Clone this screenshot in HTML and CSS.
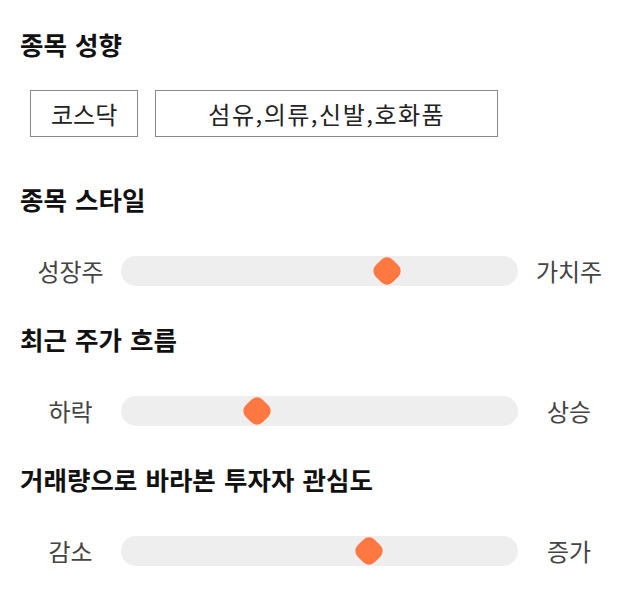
FILE: index.html
```html
<!DOCTYPE html>
<html lang="ko">
<head>
<meta charset="utf-8">
<link rel="stylesheet" href="styles.css">
</head>
<body>
<main class="page">
  <h2 class="title first">종목 성향</h2>
  <div class="tags">
    <span class="tag">코스닥</span>
    <span class="tag wide">섬유,의류,신발,호화품</span>
  </div>

  <h2 class="title">종목 스타일</h2>
  <div class="slider">
    <span class="label">성장주</span>
    <div class="track"><span class="thumb" style="left: 67%"></span></div>
    <span class="label">가치주</span>
  </div>

  <h2 class="title">최근 주가 흐름</h2>
  <div class="slider">
    <span class="label">하락</span>
    <div class="track"><span class="thumb" style="left: 34.2%"></span></div>
    <span class="label">상승</span>
  </div>

  <h2 class="title">거래량으로 바라본 투자자 관심도</h2>
  <div class="slider">
    <span class="label">감소</span>
    <div class="track"><span class="thumb" style="left: 62.5%"></span></div>
    <span class="label">증가</span>
  </div>
</main>
</body>
</html>
```
FILE: styles.css
```css
html, body {
  margin: 0;
  padding: 0;
  background: #ffffff;
}

.page {
  padding: 0 20px;
  font-family: "Noto Sans CJK KR", "Noto Sans", sans-serif;
  color: #111;
}

.title {
  margin: 0 0 41px;
  font-size: 25.5px;
  font-weight: 700;
  line-height: 32px;
  height: 32px;
  word-spacing: 1px;
  color: #111;
}

.title.first {
  padding-top: 28px;
  margin-bottom: 30px;
}

.tags {
  display: flex;
  gap: 17px;
  padding-left: 10px;
  margin-bottom: 46px;
}

.tag {
  display: flex;
  align-items: center;
  justify-content: center;
  height: 47px;
  box-sizing: border-box;
  border: 1px solid #8a8a8a;
  font-size: 24px;
  color: #222;
  padding: 0 20px;
}

.tag.wide {
  width: 343px;
  letter-spacing: 1.5px;
}

.slider {
  display: grid;
  grid-template-columns: 101px 1fr 102px;
  align-items: center;
  height: 30px;
  margin-bottom: 37px;
}

.label {
  text-align: center;
  font-size: 24px;
  color: #444;
  line-height: 30px;
}

.track {
  position: relative;
  height: 30px;
  border-radius: 15px;
  background: #eeeeee;
}

.thumb {
  position: absolute;
  top: 50%;
  width: 24px;
  height: 24px;
  margin-left: -12px;
  margin-top: -12px;
  background: #ff7842;
  border-radius: 8px;
  transform: rotate(45deg);
}
```
